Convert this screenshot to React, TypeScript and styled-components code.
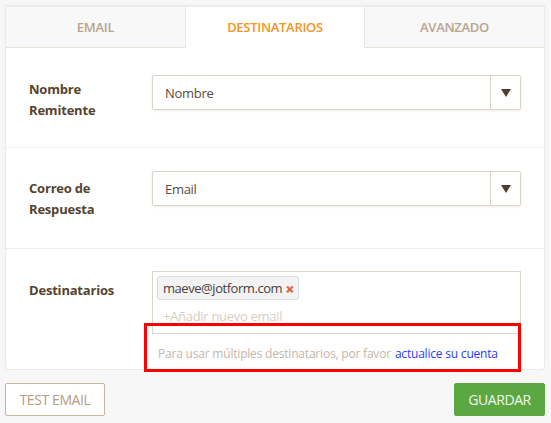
import React from 'react';
import styled, { createGlobalStyle } from 'styled-components';

const GlobalStyle = createGlobalStyle`
  html, body {
    margin: 0;
    padding: 0;
    background: #f7f7f7;
    font-family: "Open Sans", "Noto Sans", sans-serif;
  }
`;

const Page = styled.div`
  width: 551px;
  height: 423px;
  padding: 6px 6px 0 5px;
  box-sizing: border-box;
`;

const Card = styled.div`
  position: relative;
  background: #fff;
  border: 1px solid #ebebeb;
  border-top: none;
  border-radius: 0 0 4px 4px;
  box-shadow: 0 -1px 2px rgba(0, 0, 0, 0.06);
`;

const Tabs = styled.div`
  display: grid;
  grid-template-columns: 180px 179px 1fr;
  height: 42px;
`;

const Tab = styled.div<{ active?: boolean; last?: boolean }>`
  display: flex;
  align-items: center;
  justify-content: center;
  font-size: 13px;
  font-weight: 600;
  letter-spacing: -0.3px;
  color: ${p => (p.active ? '#f7941d' : '#b9a48e')};
  background: ${p => (p.active ? '#fff' : '#f8f8f8')};
  border-top: 1px solid #ececec;
  border-bottom: 1px solid ${p => (p.active ? 'transparent' : '#e9e2db')};
  border-right: ${p => (p.last ? 'none' : '1px solid #ece6e0')};
  box-sizing: border-box;
`;

const Row = styled.div<{ height: number; last?: boolean }>`
  display: grid;
  grid-template-columns: 123px 369px;
  align-items: start;
  height: ${p => p.height}px;
  padding-left: 23px;
  box-sizing: border-box;
  border-bottom: ${p => (p.last ? 'none' : '1px solid #ececec')};
`;

const Label = styled.div<{ top: number }>`
  padding-top: ${p => p.top}px;
  font-size: 13px;
  font-weight: 700;
  line-height: 21px;
  letter-spacing: -0.2px;
  color: #55432f;
`;

const Select = styled.div<{ top: number }>`
  margin-top: ${p => p.top}px;
  display: flex;
  height: 35px;
  border: 1px solid #ddd3c9;
  border-radius: 2px;
  box-shadow: 0 1px 3px rgba(0, 0, 0, 0.08);
  box-sizing: border-box;
`;

const SelectValue = styled.div`
  flex: 1;
  display: flex;
  align-items: center;
  padding-left: 12px;
  font-size: 13px;
  color: #5a4a3c;
  letter-spacing: -0.3px;
`;

const SelectArrow = styled.div`
  width: 29px;
  display: flex;
  align-items: center;
  justify-content: center;
  border-left: 1px solid #ddd3c9;
`;

const Triangle = styled.div`
  width: 0;
  height: 0;
  border-left: 5px solid transparent;
  border-right: 5px solid transparent;
  border-top: 8px solid #4d3d2c;
  margin-top: 1px;
`;

const Field = styled.div`
  margin-top: 22px;
  display: flex;
  flex-direction: column;
`;

const EmailBox = styled.div`
  height: 63px;
  border: 1px solid #ddd3c9;
  box-sizing: border-box;
  padding: 4px 0 0 4px;
  display: flex;
  flex-direction: column;
  align-items: flex-start;
`;

const EmailTag = styled.div`
  display: flex;
  align-items: center;
  gap: 3px;
  height: 24px;
  padding: 0 4px 0 5px;
  background: #f3f3f3;
  border: 1px solid #dcdcdc;
  border-radius: 3px;
  box-sizing: border-box;
  font-size: 13px;
  color: #4a4039;
  letter-spacing: -0.45px;
`;

const TagClose = styled.span`
  color: #e2643f;
  font-weight: 800;
  font-size: 16px;
  line-height: 1;
  margin-top: 1px;
`;

const AddEmail = styled.div`
  margin-top: 7px;
  padding-left: 6px;
  font-size: 13px;
  color: #d9cdc1;
  letter-spacing: -0.3px;
`;

const Hint = styled.div`
  position: relative;
  height: 34px;
  display: flex;
  align-items: center;
  padding-left: 6px;
  padding-top: 2px;
  font-size: 12px;
  color: #c6b6a6;
  letter-spacing: -0.2px;
`;

const Link = styled.a`
  color: #1e3bff;
  text-decoration: none;
  margin-left: 4px;
`;

const Highlight = styled.div`
  position: absolute;
  left: -8px;
  right: 0;
  top: -11px;
  bottom: -2px;
  border: 3px solid #ff0000;
  pointer-events: none;
`;

const Footer = styled.div`
  display: flex;
  justify-content: space-between;
  align-items: center;
  margin-top: 13px;
`;

const Button = styled.button<{ primary?: boolean }>`
  height: 33px;
  padding: 0;
  border-radius: 2px;
  font-family: "Open Sans", "Noto Sans", sans-serif;
  font-size: 14px;
  letter-spacing: -0.4px;
  cursor: pointer;
  border: ${p => (p.primary ? '1px solid #5ba843' : '1px solid #c9b49c')};
  background: ${p => (p.primary ? '#5ba843' : '#fff')};
  color: ${p => (p.primary ? '#f1f7ee' : '#b49c84')};
  width: ${p => (p.primary ? '91px' : '100px')};
`;

export default function App() {
  return (
    <Page>
      <GlobalStyle />
      <Card>
        <Tabs>
          <Tab>EMAIL</Tab>
          <Tab active>DESTINATARIOS</Tab>
          <Tab last>AVANZADO</Tab>
        </Tabs>
        <Row height={100}>
          <Label top={31}>
            Nombre
            <br />
            Remitente
          </Label>
          <Select top={27}>
            <SelectValue>Nombre</SelectValue>
            <SelectArrow>
              <Triangle />
            </SelectArrow>
          </Select>
        </Row>
        <Row height={101}>
          <Label top={30}>
            Correo de
            <br />
            Respuesta
          </Label>
          <Select top={23}>
            <SelectValue>Email</SelectValue>
            <SelectArrow>
              <Triangle />
            </SelectArrow>
          </Select>
        </Row>
        <Row height={120} last>
          <Label top={31}>Destinatarios</Label>
          <Field>
            <EmailBox>
              <EmailTag>
                maeve@jotform.com <TagClose>×</TagClose>
              </EmailTag>
              <AddEmail>+Añadir nuevo email</AddEmail>
            </EmailBox>
            <Hint>
              Para usar múltiples destinatarios, por favor
              <Link href="#">actualice su cuenta</Link>
              <Highlight />
            </Hint>
          </Field>
        </Row>
      </Card>
      <Footer>
        <Button>TEST EMAIL</Button>
        <Button primary>GUARDAR</Button>
      </Footer>
    </Page>
  );
}
